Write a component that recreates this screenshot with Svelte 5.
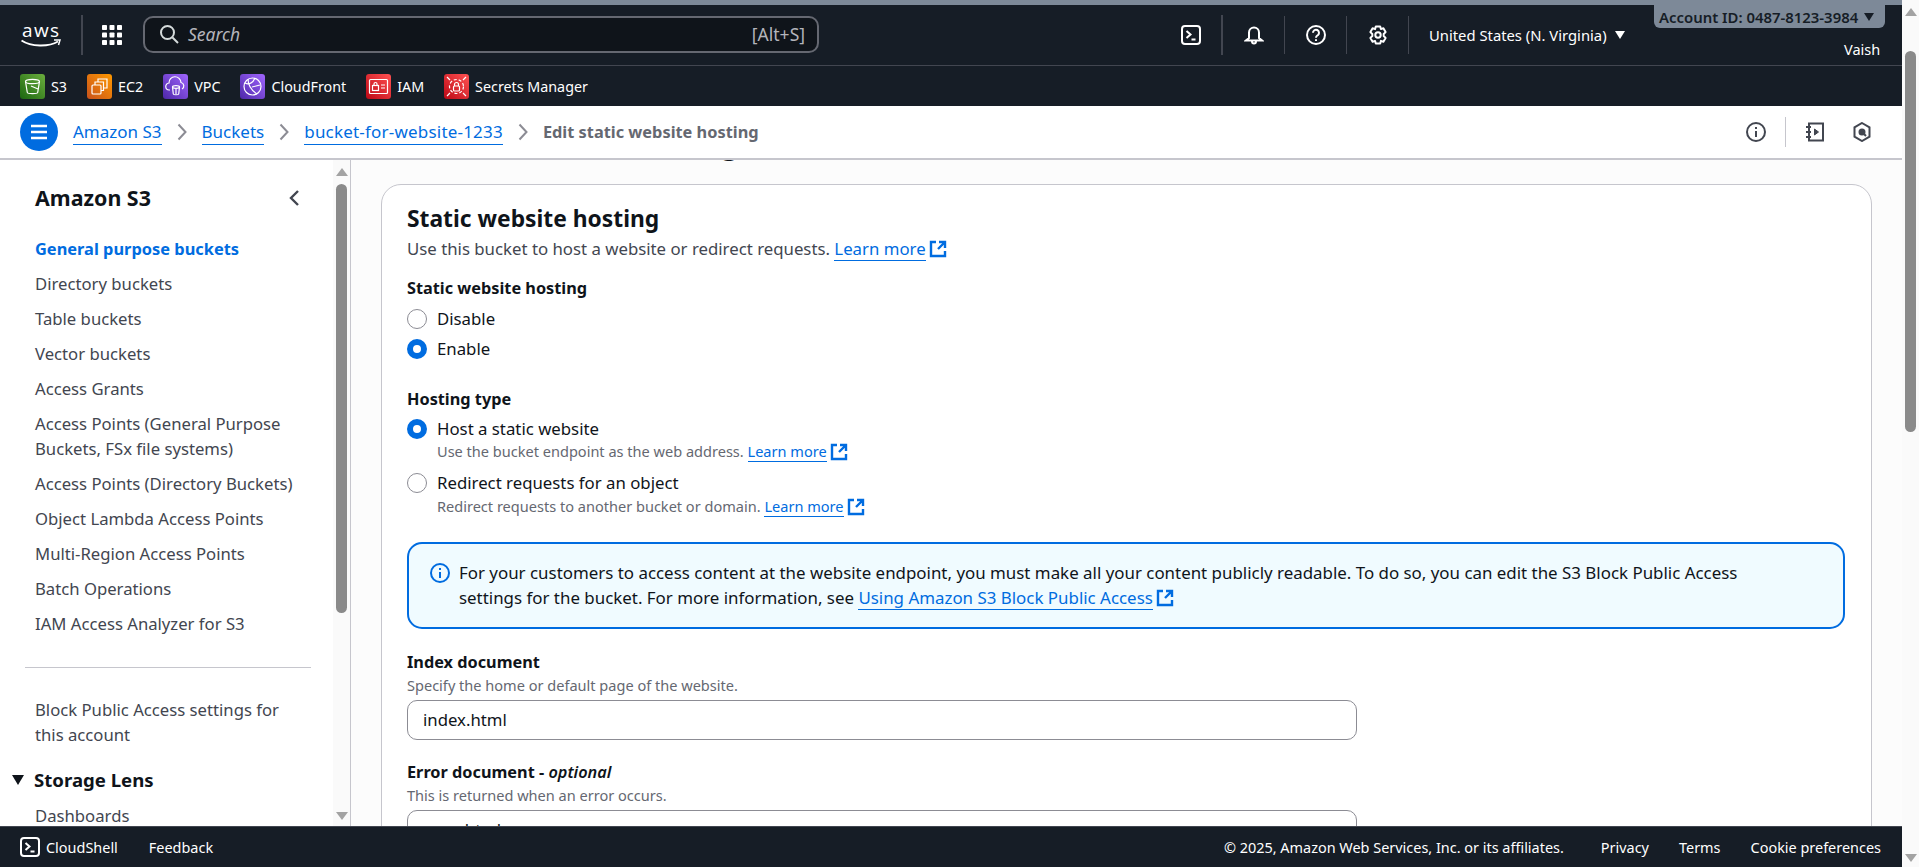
<script>
  const services = [
    { name: "S3", kind: "s3", color: "green" },
    { name: "EC2", kind: "ec2", color: "orange" },
    { name: "VPC", kind: "vpc", color: "purple" },
    { name: "CloudFront", kind: "cf", color: "purple" },
    { name: "IAM", kind: "iam", color: "red" },
    { name: "Secrets Manager", kind: "sec", color: "red" },
  ];

  const mainNav = [
    "Directory buckets",
    "Table buckets",
    "Vector buckets",
    "Access Grants",
    "Access Points (General Purpose Buckets, FSx file systems)",
    "Access Points (Directory Buckets)",
    "Object Lambda Access Points",
    "Multi-Region Access Points",
    "Batch Operations",
    "IAM Access Analyzer for S3",
  ];
</script>

{#snippet ext()}
  <svg class="ext" viewBox="0 0 18 18" width="18" height="18" fill="none" stroke="#006ce0" stroke-width="2.400">
    <path d="M7 2H2v14h14v-5" />
    <path d="M10 2h6v6M16 2L9 9" />
  </svg>
{/snippet}

{#snippet termIcon(size)}
  <svg viewBox="0 0 20 20" width={size} height={size} fill="none" stroke="#fff" stroke-width="2">
    <rect x="1" y="1" width="18" height="18" rx="3" />
    <path d="M5.500 6l4 3.500-4 3.500M10.500 14.500h4" />
  </svg>
{/snippet}

<div class="root">
  <div class="page">
    <div class="stripe"></div>
    <header class="topnav">
      <svg class="logo" viewBox="0 0 40 26" width="40" height="26" fill="none">
        <text x="1" y="15" fill="#fff" font-size="19" font-family="Open Sans, sans-serif" textLength="37">aws</text>
        <path d="M0.500 18.500C10 25 28 25 37 19.500" stroke="#fff" stroke-width="2" />
        <path d="M33 18h6l-1.500 5" stroke="#fff" stroke-width="1.500" />
      </svg>
      <span class="vline first"></span>
      <svg class="grid" viewBox="0 0 20 20" width="20" height="20" fill="#fff">
        {#each [0, 7.5, 15] as y}
          {#each [0, 7.5, 15] as x}
            <rect {x} {y} width="5" height="5" rx="0.800" />
          {/each}
        {/each}
      </svg>
      <div class="search">
        <svg viewBox="0 0 20 20" width="20" height="20" fill="none" stroke="#d5dbdb" stroke-width="2">
          <circle cx="8.500" cy="8.500" r="6.500" />
          <path d="M13.500 13.500l5.500 5.500" />
        </svg>
        <span class="search-text">Search</span>
        <span class="shortcut">[Alt+S]</span>
      </div>
      <div class="nav-right">
        <span class="nav-ico term">{@render termIcon(20)}</span>
        <span class="vline thick"></span>
        <span class="nav-ico">
          <svg viewBox="0 0 20 20" width="20" height="20" fill="none" stroke="#fff" stroke-width="2">
            <path d="M5 13V7.500a5 5 0 0110 0V13l3 2.500H2zM8 16.500a2 2 0 004 0" />
          </svg>
        </span>
        <span class="vline"></span>
        <span class="nav-ico">
          <svg viewBox="0 0 20 20" width="20" height="20" fill="none" stroke="#fff" stroke-width="2">
            <circle cx="10" cy="10" r="9" />
            <path d="M7 7.800a3 3 0 115 2.200c-1.200.9-2 1.300-2 2.800" />
            <path d="M10 14.200v1.800" />
          </svg>
        </span>
        <span class="vline"></span>
        <span class="nav-ico">
          <svg viewBox="0 0 20 20" width="20" height="20" fill="none" stroke="#fff" stroke-width="2">
            <path d="M7.800 1.500h4.400l.7 2.600 2.500-.8 2.200 3.800-1.900 1.900 0 2 1.900 1.900-2.200 3.800-2.500-.8-.7 2.600H7.800l-.7-2.600-2.500.8-2.200-3.800 1.900-1.900 0-2-1.900-1.900 2.200-3.800 2.500.8z" stroke-linejoin="round" />
            <circle cx="10" cy="10" r="2.700" />
          </svg>
        </span>
        <span class="vline"></span>
        <span class="region">United States (N. Virginia)</span>
        <span class="caret white"></span>
      </div>
      <div class="account">
        <span>Account ID: 0487-8123-3984</span>
        <span class="caret dark"></span>
      </div>
      <span class="user">Vaish</span>
    </header>

    <nav class="services">
      {#each services as s}
        <span class="service">
          <span class="chip {s.color}">
            <svg viewBox="0 0 25 25" width="25" height="25" fill="none" stroke="#fff" stroke-width="1.200">
              {#if s.kind === "s3"}
                <ellipse cx="12.500" cy="7.500" rx="7" ry="2.200" />
                <path d="M5.500 7.500l1.800 11c.3 1.500 10.100 1.500 10.400 0l1.800-11M11 12l7 3" />
              {:else if s.kind === "ec2"}
                <rect x="5" y="11" width="9" height="9" rx="1" />
                <path d="M8 11V8h8.500v8.500H14M11 8V5h9v9h-3.500" />
              {:else if s.kind === "vpc"}
                <path d="M7 16H6.500a3.500 3.500 0 01-.5-7 6 6 0 0112-.500 3.500 3.500 0 011 6.500" />
                <ellipse cx="13" cy="13" rx="3.500" ry="1.300" />
                <path d="M9.500 13l.8 7c.2 1 5.200 1 5.400 0l.8-7M13 15v5" />
              {:else if s.kind === "cf"}
                <circle cx="12.500" cy="12.500" r="8.500" />
                <path d="M5 9c4 2 8 0 10-5M8 5c0 6 3 11 9 15M12 13l8-2" />
              {:else if s.kind === "iam"}
                <rect x="3.500" y="5.500" width="18" height="14" rx="1" />
                <rect x="6.500" y="11.500" width="6" height="5" />
                <path d="M8 11.500V10a1.500 1.500 0 013 0v1.500M15 11h4M15 14h4" />
              {:else}
                <circle cx="12.500" cy="12.500" r="7" stroke-dasharray="3 2" />
                <rect x="9.500" y="12" width="6" height="5" rx="1" />
                <path d="M10.500 12v-1.500a2 2 0 014 0V12M3 3l3 3M22 3l-3 3M3 22l3-3M22 22l-3-3" />
              {/if}
            </svg>
          </span>
          <span>{s.name}</span>
        </span>
      {/each}
    </nav>

    <div class="crumbs">
      <span class="burger">
        <svg viewBox="0 0 18 16" width="18" height="16" fill="none" stroke="#fff" stroke-width="2.500">
          <path d="M1 2h16M1 8h16M1 14h16" />
        </svg>
      </span>
      <a href="#s3" class="crumb">Amazon S3</a>
      <svg class="chev" viewBox="0 0 10 18" width="10" height="18" fill="none" stroke="#8c8c94" stroke-width="2"><path d="M1.500 1.500L8.500 9l-7 7.500" /></svg>
      <a href="#buckets" class="crumb">Buckets</a>
      <svg class="chev" viewBox="0 0 10 18" width="10" height="18" fill="none" stroke="#8c8c94" stroke-width="2"><path d="M1.500 1.500L8.500 9l-7 7.500" /></svg>
      <a href="#bucket" class="crumb wide">bucket-for-website-1233</a>
      <svg class="chev" viewBox="0 0 10 18" width="10" height="18" fill="none" stroke="#8c8c94" stroke-width="2"><path d="M1.500 1.500L8.500 9l-7 7.500" /></svg>
      <span class="crumb-current">Edit static website hosting</span>
      <div class="crumb-tools">
        <svg viewBox="0 0 20 20" width="20" height="20" fill="none" stroke="#424650" stroke-width="2">
          <circle cx="10" cy="10" r="9" />
          <path d="M10 9v6M10 5v2" />
        </svg>
        <span class="vline light"></span>
        <svg class="book" viewBox="0 0 20 20" width="20" height="20" fill="none" stroke="#424650" stroke-width="2">
          <path d="M4 1.500h14v17H4zM1 5h5M1 10h5M1 15h5" />
          <path d="M9.500 7l4 3-4 3z" fill="#424650" stroke-width="1" />
        </svg>
        <svg class="hex" viewBox="0 0 20 20" width="20" height="20" fill="none" stroke="#424650" stroke-width="2">
          <path d="M10 1l7.500 4.300v9.400L10 19l-7.500-4.300V5.300z" />
          <circle cx="10" cy="10" r="2.500" fill="#424650" />
          <path d="M10 10l4 4" />
        </svg>
      </div>
    </div>

    <div class="body">
      <aside class="side">
        <div class="side-inner">
          <div class="side-head">
            <h2>Amazon S3</h2>
            <svg viewBox="0 0 12 18" width="12" height="18" fill="none" stroke="#424650" stroke-width="2.400"><path d="M10 2L3 9l7 7" /></svg>
          </div>
          <ul>
            <li class="active">General purpose buckets</li>
            {#each mainNav as item}
              <li>{item}</li>
            {/each}
          </ul>
          <hr />
          <ul class="second">
            <li>Block Public Access settings for this account</li>
          </ul>
          <div class="lens">
            <span class="lens-caret"></span>
            <span>Storage Lens</span>
          </div>
          <ul class="third"><li>Dashboards</li></ul>
        </div>
        <div class="bar side-bar">
          <span class="up"></span>
          <span class="thumb"></span>
          <span class="down"></span>
        </div>
      </aside>

      <main class="main">
        <h1>Edit static website hosting</h1>
        <section class="card">
          <h2>Static website hosting</h2>
          <p class="desc">Use this bucket to host a website or redirect requests. <a href="#more">Learn more </a>{@render ext()}</p>

          <div class="label l1">Static website hosting</div>
          <div class="radio r1"><span class="dot"></span>Disable</div>
          <div class="radio r2"><span class="dot on"></span>Enable</div>

          <div class="label l2">Hosting type</div>
          <div class="radio r3"><span class="dot on"></span>Host a static website</div>
          <div class="hint in">Use the bucket endpoint as the web address. <a href="#more">Learn more </a>{@render ext()}</div>
          <div class="radio r4"><span class="dot"></span>Redirect requests for an object</div>
          <div class="hint in h2nd">Redirect requests to another bucket or domain. <a href="#more">Learn more </a>{@render ext()}</div>

          <div class="alert">
            <svg viewBox="0 0 20 20" width="20" height="20" fill="none" stroke="#006ce0" stroke-width="2">
              <circle cx="10" cy="10" r="9" />
              <path d="M10 9v6M10 5v2" />
            </svg>
            <p>For your customers to access content at the website endpoint, you must make all your content publicly readable. To do so, you can edit the S3 Block Public Access settings for the bucket. For more information, see <a href="#block">Using Amazon S3 Block Public Access </a>{@render ext()}</p>
          </div>

          <div class="label l3">Index document</div>
          <div class="hint">Specify the home or default page of the website.</div>
          <div class="input">index.html</div>

          <div class="label l4">Error document - <i>optional</i></div>
          <div class="hint">This is returned when an error occurs.</div>
          <div class="input">error.html</div>
        </section>
      </main>
    </div>

    <footer class="foot">
      <span class="foot-ico">{@render termIcon(20)}</span>
      <span class="foot-shell">CloudShell</span>
      <span class="foot-feedback">Feedback</span>
      <span class="copy">© 2025, Amazon Web Services, Inc. or its affiliates.</span>
      <span class="foot-link privacy">Privacy</span>
      <span class="foot-link terms">Terms</span>
      <span class="foot-link cookie">Cookie preferences</span>
    </footer>
  </div>

  <div class="bar page-bar">
    <span class="up"></span>
    <span class="thumb"></span>
    <span class="down"></span>
  </div>
</div>

<style>
  :global(body) {
    margin: 0;
    overflow: hidden;
    font-family: "Noto Sans", "Open Sans", sans-serif;
  }

  * {
    box-sizing: border-box;
  }

  a {
    color: #006ce0;
    text-decoration: none;
  }

  .root {
    display: flex;
    width: 1919px;
    height: 867px;
    overflow: hidden;
    background: #fff;
    color: #0f141a;
  }

  .page {
    width: 1902px;
    height: 867px;
    display: flex;
    flex-direction: column;
  }

  .stripe {
    height: 5px;
    background: #7d8998;
    flex: none;
  }

  .topnav {
    position: relative;
    flex: none;
    height: 61px;
    background: #161d26;
    border-bottom: 1px solid #424650;
    display: flex;
    align-items: center;
    padding-left: 21px;
    color: #fff;
  }

  .logo {
    flex: none;
    margin-top: -1px;
  }

  .vline {
    width: 1px;
    height: 38px;
    background: #424650;
    flex: none;
    margin-top: -1px;
  }

  .vline.first {
    height: 40px;
    width: 2px;
    margin-left: 20px;
  }

  .vline.thick {
    width: 2px;
    height: 40px;
  }

  .vline.light {
    background: #c6c6cd;
    height: 30px;
    margin: 0 19px;
  }

  .grid {
    margin-left: 19px;
    margin-top: -1px;
  }

  .search {
    margin-left: 21px;
    margin-top: -2px;
    width: 676px;
    height: 37px;
    background: #0f141a;
    border: 2px solid #656871;
    border-radius: 10px;
    display: flex;
    align-items: center;
    padding: 0 12px 0 14px;
  }

  .search-text {
    font-style: italic;
    color: #b4b4bb;
    font-size: 17.5px;
    margin-left: 9px;
  }

  .shortcut {
    margin-left: auto;
    color: #b4b4bb;
    font-size: 17.5px;
  }

  .nav-right {
    position: absolute;
    left: 1181px;
    top: 10px;
    display: flex;
    align-items: center;
    height: 40px;
  }

  .nav-ico {
    display: flex;
    width: 20px;
    height: 20px;
    margin: 0 20px 0 21px;
  }

  .nav-ico.term {
    margin: 0 20px 0 0;
  }

  .region {
    font-size: 14.8px;
    margin-left: 20px;
  }

  .caret {
    display: inline-block;
    width: 0;
    height: 0;
    border-left: 5.5px solid transparent;
    border-right: 5.5px solid transparent;
  }

  .caret.white {
    border-top: 8px solid #fff;
    margin-left: 8px;
  }

  .caret.dark {
    border-top: 8px solid #161d26;
    margin-left: 6px;
  }

  .account {
    position: absolute;
    left: 1654px;
    top: 0;
    width: 231px;
    height: 23px;
    background: #7d8998;
    border-radius: 0 0 6px 6px;
    display: flex;
    align-items: center;
    padding-left: 5px;
    color: #161d26;
    font-size: 14.9px;
    font-weight: 600;
    white-space: nowrap;
  }

  .user {
    position: absolute;
    left: 1844px;
    top: 34px;
    font-size: 14.5px;
    line-height: 20px;
  }

  .services {
    flex: none;
    height: 40px;
    background: #161d26;
    display: flex;
    align-items: center;
    padding-left: 20px;
    color: #fff;
    font-size: 14.3px;
    gap: 20px;
  }

  .service {
    display: flex;
    align-items: center;
    gap: 6px;
  }

  .chip {
    display: flex;
    width: 25px;
    height: 25px;
    border-radius: 3px;
  }

  .green {
    background: linear-gradient(45deg, #1b660f, #6cae3e);
  }

  .orange {
    background: linear-gradient(45deg, #c8511b, #ff9900);
  }

  .purple {
    background: linear-gradient(45deg, #4d27a8, #a166ff);
  }

  .red {
    background: linear-gradient(45deg, #bd0816, #ff5252);
  }

  .crumbs {
    flex: none;
    height: 54px;
    background: #fff;
    border-bottom: 2px solid #c6c6cd;
    display: flex;
    align-items: center;
    padding-left: 20px;
    font-size: 17px;
  }

  .burger {
    width: 38px;
    height: 38px;
    border-radius: 50%;
    background: #006ce0;
    display: flex;
    align-items: center;
    justify-content: center;
    margin-right: 15px;
  }

  .crumb {
    border-bottom: 1px solid #006ce0;
    line-height: 24px;
  }

  .crumb.wide {
    letter-spacing: 0.2px;
  }

  .chev {
    margin: 0 15px;
    flex: none;
  }

  .crumb-current {
    font-size: 16.35px;
    font-weight: 700;
    color: #656871;
  }

  .crumb-tools {
    margin-left: auto;
    display: flex;
    align-items: center;
    padding-right: 30px;
  }

  .hex {
    margin-left: 27px;
  }

  .body {
    flex: 1;
    min-height: 0;
    display: flex;
    overflow: hidden;
  }

  .side {
    width: 351px;
    flex: none;
    display: flex;
    border-right: 1px solid #c6c6cd;
    overflow: hidden;
  }

  .side-inner {
    width: 333px;
    flex: none;
    height: 667px;
    overflow: hidden;
    background: #fff;
    font-size: 16.7px;
    color: #424650;
  }

  .side-head {
    display: flex;
    align-items: center;
    justify-content: space-between;
    padding: 23px 33px 0 35px;
  }

  .side-head h2 {
    margin: 0;
    font-size: 21.4px;
    line-height: 30px;
    color: #0f141a;
    font-weight: 700;
  }

  ul {
    list-style: none;
    margin: 0;
    padding: 18px 20px 0 35px;
  }

  li {
    padding: 5px 0;
    line-height: 25px;
  }

  li.active {
    color: #006ce0;
    font-size: 16.4px;
    font-weight: 700;
  }

  hr {
    margin: 26px 22px 0 25px;
    border: 0;
    border-top: 1px solid #c6c6cd;
  }

  ul.second {
    padding-top: 24px;
    padding-right: 45px;
  }

  .lens {
    display: flex;
    align-items: center;
    margin-top: 13px;
    padding-left: 12px;
    font-size: 18.6px;
    line-height: 30px;
    font-weight: 700;
    color: #0f141a;
  }

  .lens-caret {
    width: 0;
    height: 0;
    border-left: 6.5px solid transparent;
    border-right: 6.5px solid transparent;
    border-top: 10px solid #0f141a;
    margin-right: 10px;
  }

  ul.third {
    padding-top: 3px;
  }

  .bar {
    flex: none;
    display: flex;
    flex-direction: column;
    align-items: center;
  }

  .side-bar {
    width: 17px;
    height: 667px;
    background: #fafafa;
  }

  .page-bar {
    width: 17px;
    height: 867px;
    background: #fafafa;
  }

  .up,
  .down {
    width: 0;
    height: 0;
    border-left: 6.5px solid transparent;
    border-right: 6.5px solid transparent;
    flex: none;
  }

  .up {
    border-bottom: 8px solid #a3a3a3;
  }

  .down {
    border-top: 8px solid #a3a3a3;
  }

  .thumb {
    width: 11px;
    background: #8a8a8a;
    border-radius: 6px;
    flex: none;
  }

  .side-bar .up {
    margin-top: 8px;
  }

  .side-bar .thumb {
    height: 429px;
    margin-top: 8px;
  }

  .side-bar .down {
    margin-top: 199px;
  }

  .page-bar .up {
    margin-top: 8px;
  }

  .page-bar .thumb {
    height: 381px;
    margin-top: 35px;
  }

  .page-bar .down {
    margin-top: 422px;
  }

  .main {
    flex: 1;
    min-width: 0;
    overflow: hidden;
    background: #fcfcfc;
    padding: 0 30px 0 30px;
  }

  h1 {
    margin: -34px 0 0;
    height: 38px;
    font-size: 27.1px;
    line-height: 38px;
    font-weight: 700;
    color: #0f141a;
  }

  .card {
    margin-top: 20px;
    border: 1px solid #c6c6cd;
    border-radius: 20px;
    background: #fff;
    padding: 19px 25px 25px;
    height: 900px;
  }

  .card > h2 {
    margin: 0 0 2px;
    font-size: 22.8px;
    line-height: 30px;
    font-weight: 700;
  }

  .desc {
    margin: 0;
    font-size: 16.8px;
    line-height: 25px;
    color: #424650;
    white-space: nowrap;
  }

  .desc a,
  .hint a,
  .alert a {
    border-bottom: 1px solid #006ce0;
  }

  .ext {
    vertical-align: -3px;
    margin-left: 3px;
  }

  .label {
    font-size: 16.3px;
    font-weight: 700;
    line-height: 25px;
  }

  .l1 {
    margin-top: 15px;
  }

  .l2 {
    margin-top: 26px;
  }

  .l3 {
    margin-top: 21px;
  }

  .l4 {
    margin-top: 20px;
  }

  .l4 i {
    font-weight: 600;
  }

  .radio {
    display: flex;
    align-items: center;
    font-size: 16.8px;
    line-height: 25px;
    margin-top: 5px;
  }

  .r3 {
    margin-top: 4px;
  }

  .r4 {
    margin-top: 9px;
  }

  .dot {
    width: 20px;
    height: 20px;
    border-radius: 50%;
    border: 1.500px solid #8c8c94;
    margin-right: 10px;
    flex: none;
    background: #fff;
  }

  .dot.on {
    border: 6px solid #006ce0;
  }

  .hint {
    font-size: 14.55px;
    line-height: 20px;
    color: #656871;
    white-space: nowrap;
  }

  .hint.in {
    padding-left: 30px;
  }

  .hint.h2nd {
    margin-top: 1px;
  }

  .hint .ext {
    vertical-align: -4px;
  }

  .alert {
    margin-top: 26px;
    width: 1438px;
    height: 87px;
    border: 2px solid #006ce0;
    border-radius: 15px;
    background: #f0fbff;
    padding: 16px 50px 0 21px;
    display: flex;
    gap: 9px;
    font-size: 16.9px;
  }

  .alert svg:first-child {
    flex: none;
    margin-top: 3px;
  }

  .alert p {
    margin: 0;
    line-height: 25px;
    color: #0f141a;
  }

  .input {
    margin-top: 5px;
    width: 950px;
    height: 40px;
    border: 1px solid #8c8c94;
    border-radius: 10px;
    padding: 0 15px;
    font-size: 16.75px;
    line-height: 38px;
    background: #fff;
  }

  .foot {
    flex: none;
    height: 41px;
    background: #161d26;
    border-top: 1px solid #424650;
    color: #fff;
    font-size: 14.45px;
    display: flex;
    align-items: center;
    padding-left: 20px;
  }

  .foot-ico {
    display: flex;
    width: 20px;
    height: 20px;
  }

  .foot-shell {
    margin-left: 6px;
  }

  .foot-feedback {
    margin-left: 31px;
  }

  .copy {
    margin-left: auto;
  }

  .foot-link {
    margin-left: 30px;
  }

  .privacy {
    margin-left: 37px;
  }

  .cookie {
    margin-right: 21px;
  }
</style>
